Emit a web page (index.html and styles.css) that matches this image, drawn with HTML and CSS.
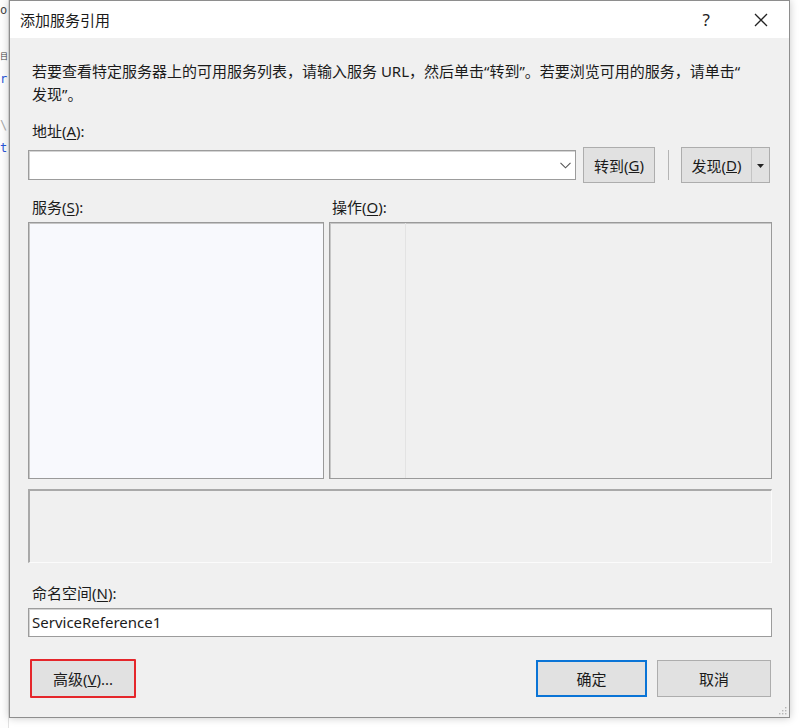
FILE: index.html
```html
<!DOCTYPE html>
<html lang="zh-CN">
<head>
    <meta charset="UTF-8">
    <title>添加服务引用</title>
    <link rel="stylesheet" href="styles.css">
</head>
<body>
    <div class="screen">
        <div class="editor">
            <div class="code-line dark">o</div>
            <div class="code-line"></div>
            <div class="code-line dark small">目</div>
            <div class="code-line blue">r</div>
            <div class="code-line"></div>
            <div class="code-line gray">\</div>
            <div class="code-line blue">t</div>
        </div>

        <div class="dialog">
            <div class="titlebar">
                <span class="title">添加服务引用</span>
                <div class="title-actions">
                    <span class="help">?</span>
                    <svg class="close" width="14" height="14" viewBox="0 0 14 14">
                        <path d="M1 1 L13 13 M13 1 L1 13" stroke="#222" stroke-width="1.3" fill="none"/>
                    </svg>
                </div>
            </div>

            <div class="content">
                <p class="desc">若要查看特定服务器上的可用服务列表，请输入服务 URL，然后单击“转到”。若要浏览可用的服务，请单击“<br>发现”。</p>

                <div class="label addr-label">地址(<u>A</u>):</div>
                <div class="address-row">
                    <div class="combo">
                        <svg width="11" height="7" viewBox="0 0 11 7">
                            <path d="M0.5 0.8 L5.5 5.8 L10.5 0.8" stroke="#555" stroke-width="1.1" fill="none"/>
                        </svg>
                    </div>
                    <div class="btn go-btn">转到(<u>G</u>)</div>
                    <span class="sep"></span>
                    <div class="btn split">
                        <span class="split-main">发现(<u>D</u>)</span>
                        <span class="split-arrow">
                            <svg width="7" height="4" viewBox="0 0 7 4"><path d="M0 0 H7 L3.5 4 Z" fill="#222"/></svg>
                        </span>
                    </div>
                </div>

                <div class="panel-labels">
                    <div class="label services-label">服务(<u>S</u>):</div>
                    <div class="label">操作(<u>O</u>):</div>
                </div>
                <div class="panels">
                    <div class="services-list"></div>
                    <div class="operations">
                        <div class="op-col"></div>
                        <div class="op-main"></div>
                    </div>
                </div>

                <div class="status"></div>

                <div class="label ns-label">命名空间(<u>N</u>):</div>
                <div class="ns-input">ServiceReference1</div>

                <div class="footer">
                    <div class="btn advanced">高级(<u>V</u>)...</div>
                    <div class="footer-right">
                        <div class="btn ok-btn">确定</div>
                        <div class="btn cancel-btn">取消</div>
                    </div>
                </div>
            </div>

            <svg class="grip" width="9" height="9" viewBox="0 0 9 9">
                <rect x="7" y="1" width="1.4" height="1.4" fill="#b5b5b5"/>
                <rect x="4" y="4" width="1.4" height="1.4" fill="#b5b5b5"/>
                <rect x="7" y="4" width="1.4" height="1.4" fill="#b5b5b5"/>
                <rect x="1" y="7" width="1.4" height="1.4" fill="#b5b5b5"/>
                <rect x="4" y="7" width="1.4" height="1.4" fill="#b5b5b5"/>
                <rect x="7" y="7" width="1.4" height="1.4" fill="#b5b5b5"/>
            </svg>
        </div>
    </div>
</body>
</html>
```

FILE: styles.css
```css
* {
    margin: 0;
    padding: 0;
    box-sizing: border-box;
}

body {
    background: #ffffff;
    font-family: "Noto Sans", "Noto Sans CJK SC", sans-serif;
    color: #1b1b1b;
    overflow: hidden;
}

.screen {
    display: flex;
    width: 800px;
    height: 728px;
}

/* code editor peeking out behind the dialog */
.editor {
    width: 9px;
    flex-shrink: 0;
    overflow: hidden;
    background: #fdfdfd;
    border-right: 1px solid #e2e2e2;
}

.code-line {
    height: 23px;
    line-height: 20px;
    font-family: "DejaVu Sans Mono", monospace;
    font-size: 12px;
    white-space: nowrap;
}

.code-line.small {
    font-family: "Noto Sans CJK SC", sans-serif;
    font-size: 8px;
}

.code-line.dark { color: #444; }
.code-line.blue { color: #2a55d8; }
.code-line.gray { color: #aaa; }

.dialog {
    position: relative;
    width: 781px;
    height: 718px;
    flex-shrink: 0;
    background: #f0f0f0;
    border: 1px solid #8e8e8e;
    box-shadow: 0 0 8px rgba(0, 0, 0, 0.22);
    display: flex;
    flex-direction: column;
}

.titlebar {
    height: 37px;
    background: #ffffff;
    display: flex;
    align-items: center;
    justify-content: space-between;
    padding-left: 10px;
    padding-right: 21px;
}

.title {
    font-size: 15px;
    color: #1a1a1a;
}

.title-actions {
    display: flex;
    align-items: center;
    gap: 44px;
}

.help {
    font-size: 17px;
    line-height: 20px;
    color: #222;
}

.close {
    display: block;
}

.content {
    padding: 0 17px 0 18px;
    display: flex;
    flex-direction: column;
}

.desc {
    margin-top: 22px;
    padding-left: 4px;
    font-size: 15px;
    line-height: 23px;
    white-space: nowrap;
}

.label {
    font-size: 15px;
    line-height: 20px;
    height: 20px;
    padding-left: 4px;
}

.label u {
    text-underline-offset: 2px;
}

.addr-label {
    margin-top: 15px;
}

.address-row {
    margin-top: 6px;
    height: 36px;
    display: flex;
    align-items: center;
}

.combo {
    width: 548px;
    height: 30px;
    background: #ffffff;
    border: 1px solid #9c9c9c;
    box-shadow: inset 1px 1px 0 #d4d4d4;
    display: flex;
    align-items: center;
    justify-content: flex-end;
    padding-right: 4px;
}

.btn {
    background: #e1e1e1;
    border: 1px solid #adadad;
    font-size: 15px;
    display: flex;
    align-items: center;
    justify-content: center;
    color: #1b1b1b;
}

.go-btn {
    margin-left: 7px;
    width: 72px;
    height: 36px;
}

.sep {
    width: 1px;
    height: 30px;
    background: #b4b4b4;
    margin: 0 12px 0 13px;
}

.split {
    width: 89px;
    height: 36px;
    justify-content: flex-start;
}

.split-main {
    width: 70px;
    height: 100%;
    display: flex;
    align-items: center;
    justify-content: center;
    border-right: 1px solid #c4c4c4;
}

.split-arrow {
    flex: 1;
    display: flex;
    align-items: center;
    justify-content: center;
    padding-top: 2px;
}

.panel-labels {
    margin-top: 14px;
    display: flex;
}

.services-label {
    width: 300px;
}

.panels {
    margin-top: 5px;
    height: 257px;
    display: flex;
    gap: 5px;
}

.services-list {
    width: 296px;
    background: #f8f9fd;
    border: 1px solid #9a9a9a;
    box-shadow: inset 1px 1px 0 #c6c6c6;
}

.operations {
    flex: 1;
    background: #f0f0f0;
    border: 1px solid #9a9a9a;
    box-shadow: inset 1px 1px 0 #c6c6c6;
    display: flex;
}

.op-col {
    width: 76px;
    border-right: 1px solid #e3e3e3;
}

.op-main {
    flex: 1;
}

.status {
    margin-top: 10px;
    height: 74px;
    border-top: 2px solid #a9a9a9;
    border-left: 2px solid #a9a9a9;
    border-right: 1px solid #fbfbfb;
    border-bottom: 1px solid #fbfbfb;
}

.ns-label {
    margin-top: 20px;
}

.ns-input {
    margin-top: 5px;
    height: 29px;
    background: #ffffff;
    border: 1px solid #9c9c9c;
    box-shadow: inset 1px 1px 0 #d4d4d4;
    font-size: 15px;
    line-height: 27px;
    padding-left: 3px;
}

.footer {
    margin-top: 22px;
    display: flex;
    justify-content: space-between;
    align-items: center;
}

.advanced {
    margin-left: 2px;
    width: 106px;
    height: 39px;
    border: 2px solid #e5262b;
    border-radius: 1px;
}

.footer-right {
    display: flex;
    gap: 10px;
    margin-right: 1px;
}

.ok-btn {
    width: 111px;
    height: 37px;
    border: 2px solid #0a74d6;
}

.cancel-btn {
    width: 114px;
    height: 37px;
}

.grip {
    position: absolute;
    right: 2px;
    bottom: 2px;
}
```
